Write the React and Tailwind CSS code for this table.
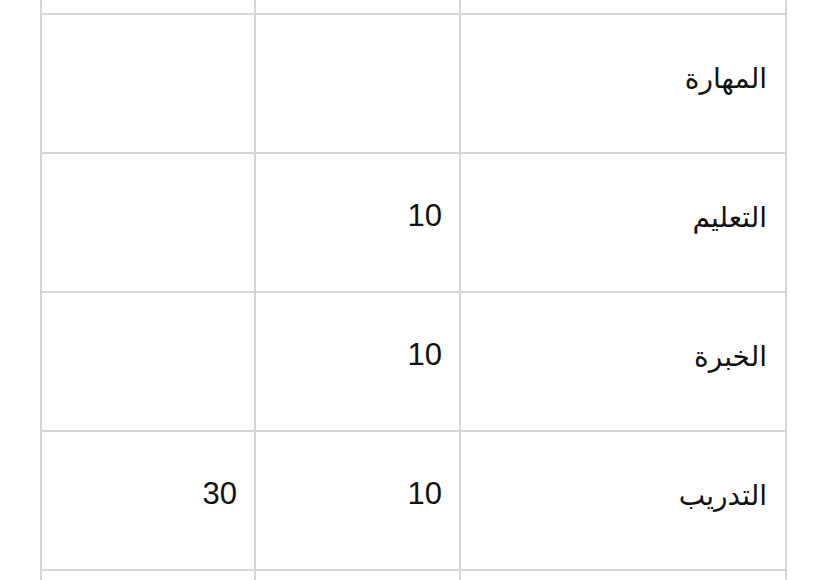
import React from "react";

const rows = [
  { label: "المهارة", a: "", b: "" },
  { label: "التعليم", a: "10", b: "" },
  { label: "الخبرة", a: "10", b: "" },
  { label: "التدريب", a: "10", b: "30" },
];

function Cell({ children }) {
  return (
    <div className="bg-white pt-[39px] pr-[17px] text-right text-[31px] text-[#111]">
      {children}
    </div>
  );
}

export default function App() {
  return (
    <div
      className="h-[580px] w-[828px] overflow-hidden bg-white pl-[40px]"
      style={{ fontFamily: '"Liberation Sans", "DejaVu Sans", sans-serif' }}
    >
      <div className="grid w-[747px] grid-cols-[212px_203px_324px] grid-rows-[13px_137px_137px_137px_137px_20px] gap-[2px] bg-[#d6d6d6] px-[2px]">
        <div className="bg-white" />
        <div className="bg-white" />
        <div className="bg-white" />
        {rows.map((r) => (
          <React.Fragment key={r.label}>
            <Cell>{r.b}</Cell>
            <Cell>{r.a}</Cell>
            <div className="bg-white pt-[43px] pr-[18px] text-right text-[28px] text-[#111]">
              <span dir="rtl">{r.label}</span>
            </div>
          </React.Fragment>
        ))}
        <div className="bg-white" />
        <div className="bg-white" />
        <div className="bg-white" />
      </div>
    </div>
  );
}
